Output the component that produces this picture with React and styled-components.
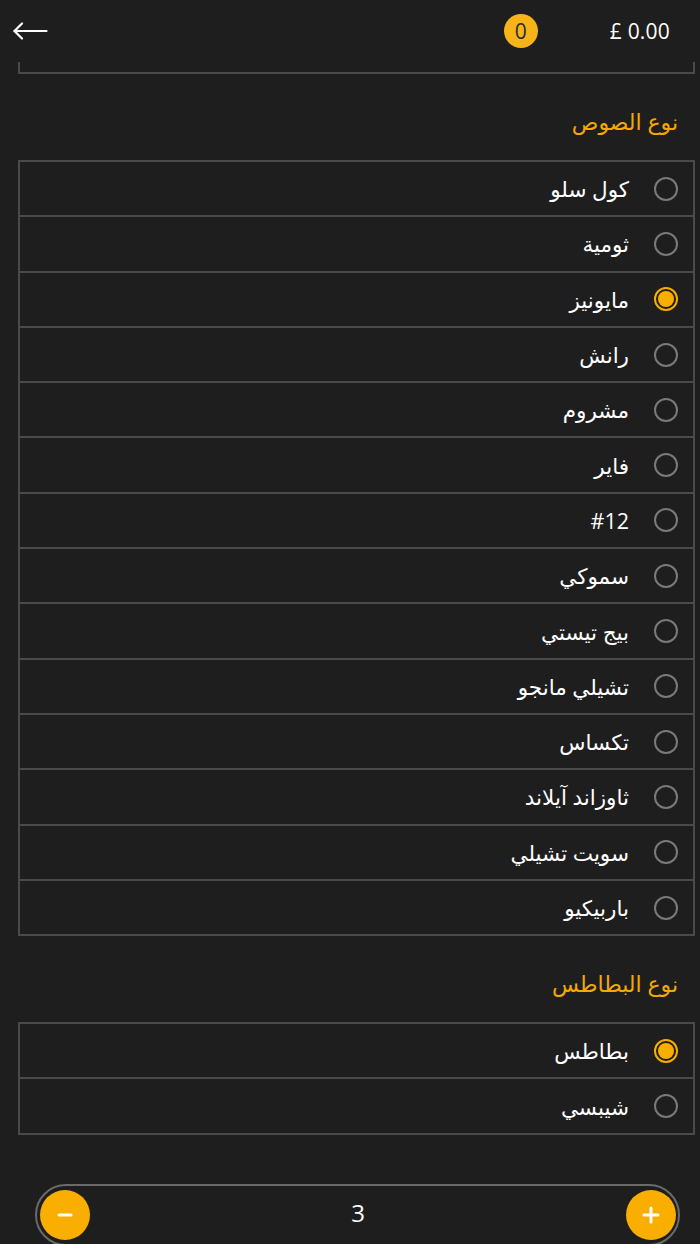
import React, { useState } from 'react'
import styled, { createGlobalStyle } from 'styled-components'

const GlobalStyle = createGlobalStyle`
  html, body {
    margin: 0;
    padding: 0;
    background: #1e1e1e;
  }
  body {
    font-family: "Open Sans", "DejaVu Sans", sans-serif;
    color: #fff;
  }
`

const sauces = [
  'كول سلو',
  'ثومية',
  'مايونيز',
  'رانش',
  'مشروم',
  'فاير',
  '#12',
  'سموكي',
  'بيج تيستي',
  'تشيلي مانجو',
  'تكساس',
  'ثاوزاند آيلاند',
  'سويت تشيلي',
  'باربيكيو',
]

const fries = ['بطاطس', 'شيبسي']

const Page = styled.div`
  width: 700px;
  min-height: 1244px;
  background: #1e1e1e;
  overflow: hidden;
`

const Header = styled.header`
  height: 62px;
  display: flex;
  align-items: center;
  padding: 0 30px 0 13px;
  box-sizing: border-box;
`

const BackButton = styled.button`
  background: none;
  border: none;
  padding: 0;
  display: flex;
  cursor: pointer;
`

const Spacer = styled.div`
  flex: 1;
`

const Badge = styled.span`
  width: 34px;
  height: 34px;
  border-radius: 50%;
  background: #f6b418;
  color: #2a2a2a;
  font-size: 21px;
  display: flex;
  align-items: center;
  justify-content: center;
  margin-right: 72px;
`

const Price = styled.span`
  font-size: 21px;
  color: #fff;
  letter-spacing: 0.2px;
`

const Content = styled.main`
  padding: 0 5px 0 18px;
`

const CardTail = styled.div`
  height: 10px;
  border: 2px solid #4a4a4a;
  border-top: none;
`

const Section = styled.section`
  direction: rtl;
`

const Title = styled.h2`
  margin: 0;
  padding: 29px 17px 0 0;
  height: 86px;
  box-sizing: border-box;
  font-size: 22px;
  line-height: 36px;
  font-weight: 400;
  color: #f5a800;
`

const List = styled.div`
  border: 2px solid #4a4a4a;
`

const Row = styled.label`
  height: 53.3px;
  display: flex;
  align-items: center;
  gap: 25px;
  padding-right: 15px;
  cursor: pointer;
  & + & {
    border-top: 2px solid #4a4a4a;
  }
`

const Radio = styled.span`
  width: 24px;
  height: 24px;
  box-sizing: border-box;
  border-radius: 50%;
  border: 2px solid ${p => (p.checked ? '#f9ae00' : '#7a7a7a')};
  display: flex;
  align-items: center;
  justify-content: center;
  &::after {
    content: '';
    width: 16px;
    height: 16px;
    border-radius: 50%;
    background: #f9ae00;
    display: ${p => (p.checked ? 'block' : 'none')};
  }
`

const Label = styled.span`
  font-size: 21.5px;
  color: #fff;
`

const QuantityWrap = styled.div`
  padding: 49px 20px 0 35px;
`

const Quantity = styled.div`
  height: 62px;
  border: 2px solid #6a6a6a;
  border-radius: 31px;
  display: flex;
  align-items: center;
  justify-content: space-between;
  padding: 0 2px 0 3px;
  box-sizing: border-box;
`

const RoundButton = styled.button`
  width: 50px;
  height: 50px;
  border-radius: 50%;
  border: none;
  background: #f9ae00;
  display: flex;
  align-items: center;
  justify-content: center;
  padding: 0;
  cursor: pointer;
`

const Count = styled.span`
  font-size: 24px;
  line-height: 28px;
  margin-top: -3px;
  color: #fff;
`

const OptionList = ({ title, items, selected, onSelect }) => (
  <Section>
    <Title>{title}</Title>
    <List>
      {items.map((item, i) => (
        <Row key={item} onClick={() => onSelect(i)}>
          <Radio checked={selected === i} />
          <Label>{item}</Label>
        </Row>
      ))}
    </List>
  </Section>
)

export default function App() {
  const [sauce, setSauce] = useState(2)
  const [fry, setFry] = useState(0)
  const [qty, setQty] = useState(3)

  return (
    <Page>
      <GlobalStyle />
      <Header>
        <BackButton aria-label="back">
          <svg width="35" height="20" viewBox="0 0 35 20" fill="none" stroke="#fff" strokeWidth="2.2" strokeLinecap="round" strokeLinejoin="round">
            <path d="M1.5 10H33.5" />
            <path d="M9 2.5L1.5 10L9 17.5" />
          </svg>
        </BackButton>
        <Spacer />
        <Badge>0</Badge>
        <Price>£ 0.00</Price>
      </Header>
      <Content>
        <CardTail />
        <OptionList title="نوع الصوص" items={sauces} selected={sauce} onSelect={setSauce} />
        <OptionList title="نوع البطاطس" items={fries} selected={fry} onSelect={setFry} />
      </Content>
      <QuantityWrap>
        <Quantity>
          <RoundButton aria-label="decrease" onClick={() => setQty(Math.max(1, qty - 1))}>
            <svg width="18" height="18" viewBox="0 0 18 18" stroke="#fff" strokeWidth="3" strokeLinecap="round">
              <path d="M3 9H15" />
            </svg>
          </RoundButton>
          <Count>{qty}</Count>
          <RoundButton aria-label="increase" onClick={() => setQty(qty + 1)}>
            <svg width="18" height="18" viewBox="0 0 18 18" stroke="#fff" strokeWidth="3" strokeLinecap="round">
              <path d="M2 9H16M9 2V16" />
            </svg>
          </RoundButton>
        </Quantity>
      </QuantityWrap>
    </Page>
  )
}
